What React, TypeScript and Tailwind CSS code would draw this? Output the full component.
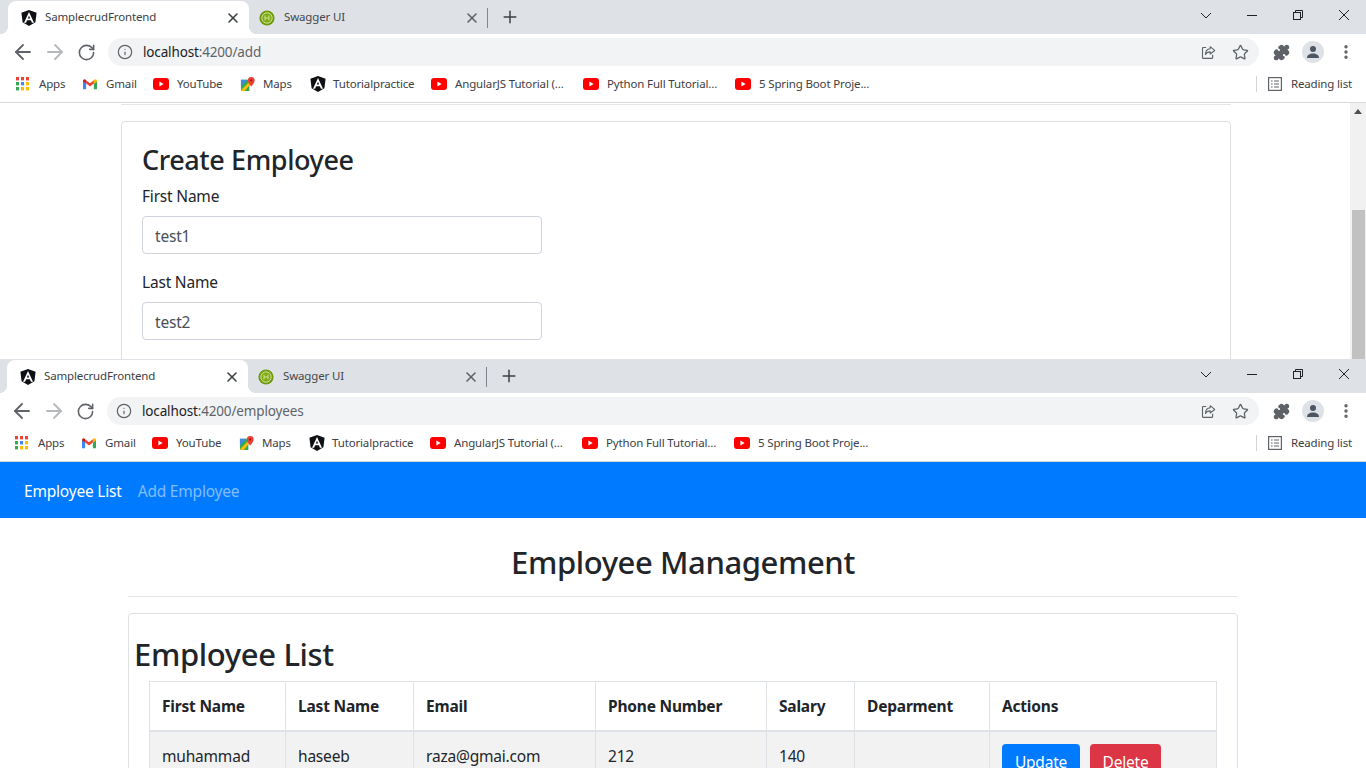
import { ArrowLeft, ArrowRight, Info, MoreVertical, Plus, Puzzle, RotateCw, Star, X } from "lucide-react";

const AngularIcon = ({ className = "" }: { className?: string }) => (
  <svg viewBox="0 0 16 16" className={className}>
    <path d="M8 0 L15.6 2.7 L14.4 12.3 L8 16 L1.6 12.3 L0.4 2.7 Z" fill="#0f1014" />
    <path d="M8 2 L13 12.8 H10.9 L9.9 10.2 H6.1 L5.1 12.8 H3 Z M8 5.8 L6.8 8.6 H9.2 Z" fill="#fff" fillRule="evenodd" />
  </svg>
);

const SwaggerIcon = () => (
  <svg viewBox="0 0 16 16" className="w-4 h-4 shrink-0">
    <circle cx="8" cy="8" r="7.6" fill="#6f9a0a" />
    <circle cx="8" cy="8" r="5.2" fill="#7fab12" stroke="#dbe8b4" strokeWidth="0.9" />
    <path d="M6 5.5v5M10 5.5v5M6 8h4" stroke="#dbe8b4" strokeWidth="0.9" fill="none" />
  </svg>
);

const AppsIcon = () => {
  const colors = ["#ea4335", "#ea4335", "#ea4335", "#34a853", "#4285f4", "#fbbc04", "#34a853", "#fbbc04", "#fbbc04"];
  return (
    <div className="grid grid-cols-3 gap-[1.5px] w-[13px] shrink-0">
      {colors.map((c, i) => (
        <svg key={i} viewBox="0 0 4 4" className="w-[3.4px] h-[3.4px]">
          <rect width="4" height="4" fill={c} />
        </svg>
      ))}
    </div>
  );
};

const GmailIcon = () => (
  <svg viewBox="0 0 16 12" className="w-[14px] h-[12px] shrink-0">
    <path d="M0 2v9a1 1 0 0 0 1 1h2.6V5.5Z" fill="#4285f4" />
    <path d="M16 2v9a1 1 0 0 1-1 1h-2.6V5.5Z" fill="#34a853" />
    <path d="M12.400 1.700C13.800-.5 16 .6 16 2.400V3l-3.600 2.700Z" fill="#fbbc04" />
    <path d="M3.600 5.500 8 8.800l4.400-3.300V1.700L8 5 3.600 1.700Z" fill="#ea4335" />
    <path d="M0 2.400C0 .6 2.200-.5 3.600 1.700v3.800L0 3Z" fill="#c5221f" />
  </svg>
);

const YoutubeIcon = () => (
  <svg viewBox="0 0 16 12" className="w-4 h-3 shrink-0">
    <rect width="16" height="12" rx="3" fill="#ff0000" />
    <path d="M6.400 3.600v4.800L10.600 6Z" fill="#fff" />
  </svg>
);

const MapsIcon = () => (
  <svg viewBox="0 0 16 16" className="w-[15px] h-[15px] shrink-0">
    <path d="M1 3h9v12H2a1 1 0 0 1-1-1Z" fill="#34a853" />
    <path d="M1 14 10 5v4l-5 6H2Z" fill="#fbbc04" />
    <path d="M1 3h7L1 10Z" fill="#4285f4" opacity="0.85" />
    <path d="M12 0a3.600 3.600 0 0 0-3.600 3.600C8.400 6.400 12 10 12 10s3.600-3.600 3.600-6.400A3.600 3.600 0 0 0 12 0Z" fill="#ea4335" />
    <circle cx="12" cy="3.600" r="1.200" fill="#a50e0e" />
  </svg>
);

const ShareIcon = () => (
  <svg viewBox="0 0 16 16" className="w-[15px] h-[15px]" fill="none" stroke="#5f6368" strokeWidth="1.2">
    <path d="M5.500 2.600H2.600a1 1 0 0 0-1 1v9.600a1 1 0 0 0 1 1h8.800a1 1 0 0 0 1-1V10.500" />
    <path d="M9.800 1.800 14.600 5.800 9.800 9.600V7.300C7.400 7.300 5.800 8.200 4.800 10.200c0-3.600 2-6 5-6.200Z" strokeLinejoin="round" />
  </svg>
);

const ReadingIcon = () => (
  <svg viewBox="0 0 14 14" className="w-[14px] h-[14px] shrink-0" fill="none" stroke="#5f6368" strokeWidth="1.2">
    <rect x="0.600" y="0.600" width="12.800" height="12.800" />
    <path d="M3 4h1.600M6 4h5M3 7h1.600M6 7h5M3 10h1.600M6 10h5" />
  </svg>
);

// window buttons: 10px glyphs, drawn on the pixel grid
const WindowControls = () => (
  <div className="flex items-center pr-[14px] gap-[30px] -mt-[6px]">
    <svg viewBox="0 0 16 16" className="w-4 h-4" fill="none" stroke="#202124" strokeWidth="1">
      <path d="M3 6l5 5 5-5" />
    </svg>
    <svg viewBox="0 0 16 16" className="w-4 h-4" fill="none" stroke="#202124" strokeWidth="1">
      <path d="M3 8.500h10" />
    </svg>
    <svg viewBox="0 0 16 16" className="w-4 h-4" fill="none" stroke="#202124" strokeWidth="1">
      <rect x="3.500" y="5.500" width="7" height="7" />
      <path d="M5.500 5.500V3.500h7v7h-2" />
    </svg>
    <svg viewBox="0 0 16 16" className="w-4 h-4" fill="none" stroke="#202124" strokeWidth="1">
      <path d="M3 3l10 10M13 3L3 13" />
    </svg>
  </div>
);

const bookmarks = [
  { label: "Apps", icon: <AppsIcon />, width: "w-[67px]", gap: "gap-[10px]" },
  { label: "Gmail", icon: <GmailIcon />, width: "w-[70px]", gap: "gap-[9px]" },
  { label: "YouTube", icon: <YoutubeIcon />, width: "w-[87px]", gap: "gap-2" },
  { label: "Maps", icon: <MapsIcon />, width: "w-[70px]", gap: "gap-[8px]" },
  { label: "Tutorialpractice", icon: <AngularIcon className="w-4 h-4 shrink-0" />, width: "w-[121px]", gap: "gap-[7px]" },
  { label: "AngularJS Tutorial (...", icon: <YoutubeIcon />, width: "w-[152px]", gap: "gap-2" },
  { label: "Python Full Tutorial...", icon: <YoutubeIcon />, width: "w-[152px]", gap: "gap-2" },
  { label: "5 Spring Boot Proje...", icon: <YoutubeIcon />, width: "w-[152px]", gap: "gap-2" },
];

const BrowserChrome = ({ path, className }: { path: string; className: string }) => (
  <div className={`shrink-0 ${className}`}>
    <div className="flex h-[34px] bg-[#dee1e6] pl-2 pt-px">
      <div className="relative flex items-center w-[241px] bg-white rounded-t-lg pl-[13px] pr-2 gap-2">
        <AngularIcon className="w-4 h-4 shrink-0" />
        <span className="flex-1 pb-[2px] text-[11.5px] tracking-[-0.15px] text-[#3c4043]">SamplecrudFrontend</span>
        <X size={16} strokeWidth={2.4} className="text-[#3c4043]" />
        <div className="absolute -right-2 bottom-0 w-2 h-2 bg-[radial-gradient(circle_at_100%_0,#dee1e6_8px,#ffffff_8px)]" />
        <div className="absolute -left-2 bottom-0 w-2 h-2 bg-[radial-gradient(circle_at_0_0,#dee1e6_8px,#ffffff_8px)]" />
      </div>
      <div className="flex items-center w-[238px] pl-[10px] pr-[7px] gap-[9px]">
        <SwaggerIcon />
        <span className="flex-1 pb-[2px] text-[11.5px] tracking-[-0.15px] text-[#45484c]">Swagger UI</span>
        <X size={16} strokeWidth={2.4} className="text-[#5f6368]" />
      </div>
      <div className="w-px h-5 bg-[#80868b] self-center" />
      <div className="flex items-center pl-3 -mt-px">
        <Plus size={20} strokeWidth={1.8} className="text-[#3c4043]" />
      </div>
      <div className="flex-1" />
      <WindowControls />
    </div>
    <div className="flex items-center h-[34px] bg-white pl-[11px] pr-[11px] pt-[2px]">
      <ArrowLeft size={24} strokeWidth={1.8} className="text-[#5f6368]" />
      <ArrowRight size={24} strokeWidth={1.8} className="ml-2 text-[#b6b9bc]" />
      <RotateCw size={19} strokeWidth={2} className="ml-[10px] text-[#5f6368]" />
      <div className="flex items-center h-7 flex-1 ml-3 bg-[#f1f3f4] rounded-full pl-[9px] pr-[10px]">
        <Info size={16} strokeWidth={1.8} className="text-[#5f6368]" />
        <span className="ml-[10px] flex-1 text-[13.5px] tracking-[-0.15px]">
          <span className="text-[#202124]">localhost</span>
          <span className="text-[#5f6368]">{path}</span>
        </span>
        <ShareIcon />
        <Star size={17} strokeWidth={1.8} className="ml-4 text-[#5f6368]" />
      </div>
      <Puzzle size={17} fill="#5f6368" className="ml-[14px] text-[#5f6368]" />
      <div className="ml-3 flex items-center justify-center w-[22px] h-[22px] rounded-full bg-[#dee1e6]">
        <svg viewBox="0 0 14 14" className="w-[14px] h-[14px]">
          <circle cx="7" cy="4" r="3" fill="#4b5563" />
          <path d="M1 13c0-3 2.600-4.600 6-4.600s6 1.600 6 4.600Z" fill="#4b5563" />
        </svg>
      </div>
      <MoreVertical size={18} strokeWidth={2.6} className="ml-[13px] text-[#5f6368]" />
    </div>
    <div className="flex items-center h-8 bg-white pl-4 pr-[14px] pb-[2px] border-b border-[#d8d9db] box-content">
      {bookmarks.map((b) => (
        <div key={b.label} className={`flex items-center shrink-0 ${b.width} ${b.gap}`}>
          {b.icon}
          <span className="text-[11.5px] tracking-[-0.15px] text-[#3c4043] whitespace-nowrap">{b.label}</span>
        </div>
      ))}
      <div className="flex-1" />
      <div className="w-px h-4 bg-[#d1d3d5]" />
      <div className="ml-[11px] flex items-center gap-[9px]">
        <ReadingIcon />
        <span className="text-[11.5px] tracking-[-0.15px] text-[#3c4043]">Reading list</span>
      </div>
    </div>
  </div>
);

const FormField = ({ label, value }: { label: string; value: string }) => (
  <div className="mb-4">
    <div className="mb-2 leading-6 text-[15.5px] tracking-[-0.2px] text-[#212529]">{label}</div>
    <div className="flex items-center w-[400px] h-[38px] px-3 pt-[3px] border border-[#ced4da] rounded text-[15.5px] tracking-[-0.2px] text-[#495057]">
      {value}
    </div>
  </div>
);

const headers = ["First Name", "Last Name", "Email", "Phone Number", "Salary", "Deparment", "Actions"];
const cellValues = ["muhammad", "haseeb", "raza@gmai.com", "212", "140", ""];

export default function App() {
  return (
    <div className="flex flex-col w-[1366px] h-[768px] overflow-hidden bg-white font-['Noto_Sans',sans-serif] text-[#212529]">
      <BrowserChrome path=":4200/add" className="w-[1366px]" />
      <div className="flex h-[256px] shrink-0 overflow-hidden">
        <div className="flex-1 pl-[121px] pr-[119px] pt-px">
          <div className="h-px bg-[#e5e5e5]" />
          <div className="mt-4 h-[400px] border border-[#dfdfdf] rounded px-5 pt-[21px]">
            <h3 className="text-[27px] leading-[34px] font-[550] tracking-[-0.4px] mb-[7px]">Create Employee</h3>
            <FormField label="First Name" value="test1" />
            <FormField label="Last Name" value="test2" />
          </div>
        </div>
        <div className="flex flex-col w-4 bg-[#f1f1f1]">
          <div className="h-[107px] pt-[6px] flex justify-center">
            <svg viewBox="0 0 8 5" className="w-2 h-[5px]">
              <path d="M4 0 8 5H0Z" fill="#505050" />
            </svg>
          </div>
          <div className="flex-1 ml-[2px] mr-px bg-[#c1c1c1]" />
        </div>
      </div>
      <BrowserChrome path=":4200/employees" className="-ml-px w-[1367px]" />
      <div className="flex items-center h-14 shrink-0 bg-[#007bff] px-6 pt-[3px] gap-4 text-[15.5px] tracking-[-0.2px]">
        <span className="text-white">Employee List</span>
        <span className="text-white/50">Add Employee</span>
      </div>
      <div className="flex-1 px-[128px]">
        <h2 className="pt-[25px] mb-[15px] text-center text-[31px] leading-[38px] font-medium tracking-[-0.4px]">Employee Management</h2>
        <div className="h-px bg-[#e5e5e5]" />
        <div className="mt-4 h-[300px] border border-[#dfdfdf] rounded pl-[5px] pt-[21px]">
          <h1 className="text-[31px] leading-[38px] font-medium tracking-[-0.35px] mb-2">Employee List</h1>
          <table className="ml-[15px] w-[1067px] table-fixed border-collapse text-[15.5px] tracking-[-0.2px]">
            <colgroup>
              <col className="w-[136px]" />
              <col className="w-[128px]" />
              <col className="w-[182px]" />
              <col className="w-[171px]" />
              <col className="w-[88px]" />
              <col className="w-[135px]" />
              <col className="w-[227px]" />
            </colgroup>
            <thead>
              <tr>
                {headers.map((h) => (
                  <th key={h} className="h-[49px] px-3 pt-[2px] text-left font-bold border border-[#dee2e6] border-b-2">
                    {h}
                  </th>
                ))}
              </tr>
            </thead>
            <tbody>
              <tr className="bg-[#f2f2f2]">
                {cellValues.map((v, i) => (
                  <td key={i} className="px-3 py-3 align-top leading-6 border border-[#dee2e6]">
                    {v}
                  </td>
                ))}
                <td className="px-3 py-3 border border-[#dee2e6]">
                  <div className="flex gap-[10px]">
                    <button className="h-[38px] w-[78px] rounded bg-[#007bff] text-white">Update</button>
                    <button className="h-[38px] w-[71px] rounded bg-[#dc3545] text-white">Delete</button>
                  </div>
                </td>
              </tr>
            </tbody>
          </table>
        </div>
      </div>
    </div>
  );
}
